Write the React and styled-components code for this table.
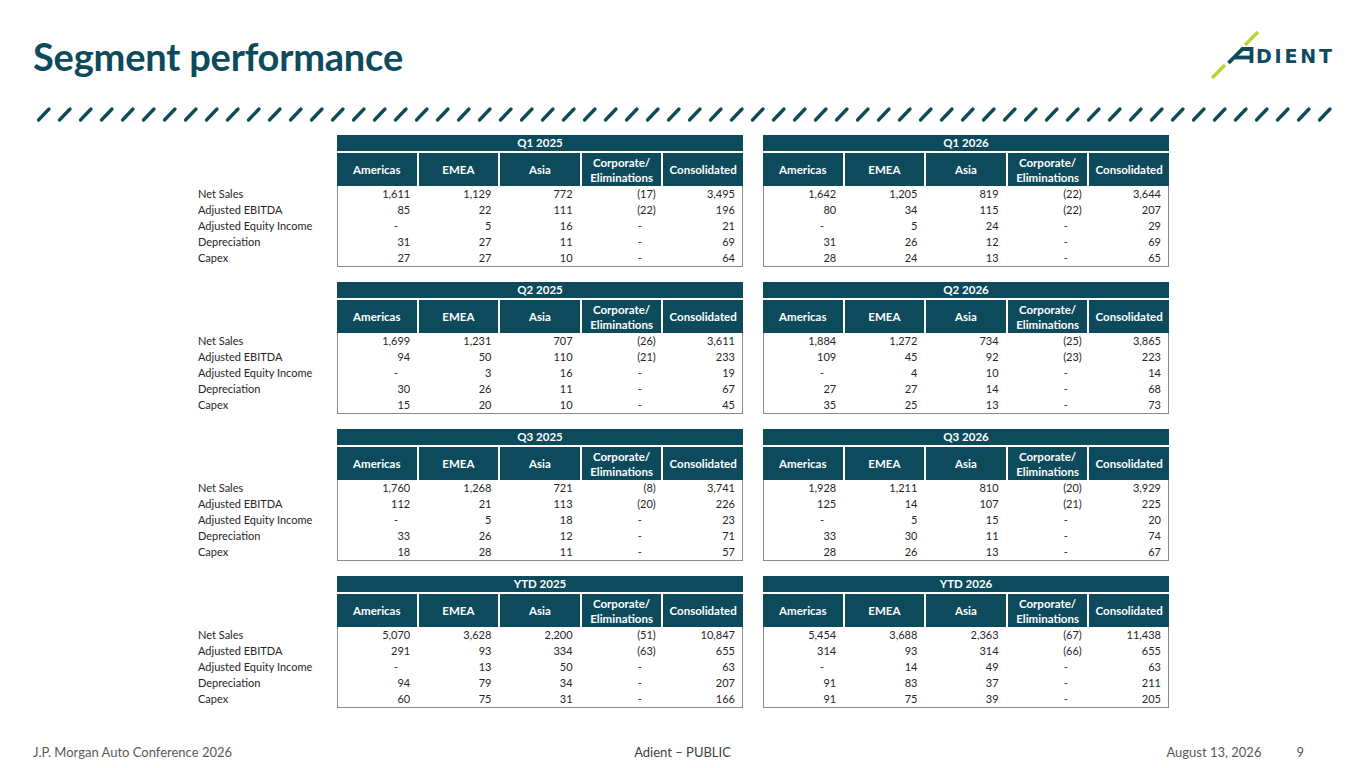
import React from "react";
import styled, { createGlobalStyle } from "styled-components";

const TEAL = "#0c4a5c";
const LIME = "#b7d432";

const Global = createGlobalStyle`
  html, body { margin: 0; padding: 0; background: #fff; }
  body { font-family: Lato, "Open Sans", "Liberation Sans", sans-serif; color: #262626; }
  * { box-sizing: border-box; }
`;

const Page = styled.div`
  width: 1365px;
  height: 768px;
  display: flex;
  flex-direction: column;
  overflow: hidden;
`;

const Top = styled.header`
  height: 100px;
  display: flex;
  justify-content: space-between;
  align-items: flex-start;
  padding: 0 30px 0 33px;
`;

const Title = styled.h1`
  margin: 34px 0 0;
  font-family: Lato, "Open Sans", sans-serif;
  font-weight: 700;
  font-size: 38px;
  line-height: 44px;
  color: ${TEAL};
  letter-spacing: -0.2px;
`;

const LogoBox = styled.div`
  margin-top: 28px;
  width: 130px;
  height: 55px;
`;

const Divider = styled.div`
  margin-top: 6px;
  height: 16px;
  padding-left: 37px;
`;

const Content = styled.main`
  margin-top: 13px;
  padding-left: 198px;
  display: flex;
  flex-direction: column;
  gap: 15px;
`;

const Block = styled.section`
  display: flex;
`;

const LabelCol = styled.div`
  width: 139px;
  padding-top: 51px;
  display: flex;
  flex-direction: column;
`;

const Label = styled.div`
  height: 16px;
  line-height: 16px;
  font-size: 11px;
  white-space: nowrap;
  color: #262626;
`;

const Tables = styled.div`
  display: flex;
  gap: 20px;
`;

const Table = styled.div`
  width: 406px;
  display: flex;
  flex-direction: column;
`;

const Bar = styled.div`
  height: 16px;
  line-height: 16px;
  background: ${TEAL};
  color: #fff;
  font-weight: 700;
  font-size: 11.5px;
  text-align: center;
  margin-bottom: 2px;
`;

const HeadRow = styled.div`
  display: grid;
  grid-template-columns: repeat(5, 1fr);
  column-gap: 2px;
  height: 33px;
`;

const HeadCell = styled.div`
  background: ${TEAL};
  color: #fff;
  font-weight: 700;
  font-size: 11.5px;
  line-height: 15px;
  text-align: center;
  display: flex;
  align-items: center;
  justify-content: center;
  padding-top: ${(p) => (p.$two ? "1px" : "0")};
`;

const Body = styled.div`
  border: 1px solid #8a8a8a;
  border-top: none;
  display: flex;
  flex-direction: column;
`;

const Row = styled.div`
  display: grid;
  grid-template-columns: repeat(5, 1fr);
  column-gap: 2px;
  height: 16px;
`;

const Cell = styled.div`
  font-size: 11px;
  line-height: 16px;
  text-align: right;
  white-space: nowrap;
  color: #262626;
  padding-right: ${(p) =>
    p.$kind === "dash" ? "19px" : p.$kind === "neg" ? "5px" : "7px"};
`;

const Footer = styled.footer`
  margin-top: auto;
  height: 24px;
  display: grid;
  grid-template-columns: 1fr auto 1fr;
  align-items: start;
  padding: 0 33px;
  font-size: 13px;
  line-height: 16px;
  color: #595959;
`;

const FootCenter = styled.div`
  color: #404040;
`;

const FootRight = styled.div`
  display: flex;
  justify-content: flex-end;
  gap: 35px;
  padding-right: 28px;
`;

const HEADERS = ["Americas", "EMEA", "Asia", "Corporate/\nEliminations", "Consolidated"];
const LABELS = ["Net Sales", "Adjusted EBITDA", "Adjusted Equity Income", "Depreciation", "Capex"];

const BLOCKS = [
  [
    {
      title: "Q1 2025",
      rows: [
        ["1,611", "1,129", "772", "(17)", "3,495"],
        ["85", "22", "111", "(22)", "196"],
        ["-", "5", "16", "-", "21"],
        ["31", "27", "11", "-", "69"],
        ["27", "27", "10", "-", "64"],
      ],
    },
    {
      title: "Q1 2026",
      rows: [
        ["1,642", "1,205", "819", "(22)", "3,644"],
        ["80", "34", "115", "(22)", "207"],
        ["-", "5", "24", "-", "29"],
        ["31", "26", "12", "-", "69"],
        ["28", "24", "13", "-", "65"],
      ],
    },
  ],
  [
    {
      title: "Q2 2025",
      rows: [
        ["1,699", "1,231", "707", "(26)", "3,611"],
        ["94", "50", "110", "(21)", "233"],
        ["-", "3", "16", "-", "19"],
        ["30", "26", "11", "-", "67"],
        ["15", "20", "10", "-", "45"],
      ],
    },
    {
      title: "Q2 2026",
      rows: [
        ["1,884", "1,272", "734", "(25)", "3,865"],
        ["109", "45", "92", "(23)", "223"],
        ["-", "4", "10", "-", "14"],
        ["27", "27", "14", "-", "68"],
        ["35", "25", "13", "-", "73"],
      ],
    },
  ],
  [
    {
      title: "Q3 2025",
      rows: [
        ["1,760", "1,268", "721", "(8)", "3,741"],
        ["112", "21", "113", "(20)", "226"],
        ["-", "5", "18", "-", "23"],
        ["33", "26", "12", "-", "71"],
        ["18", "28", "11", "-", "57"],
      ],
    },
    {
      title: "Q3 2026",
      rows: [
        ["1,928", "1,211", "810", "(20)", "3,929"],
        ["125", "14", "107", "(21)", "225"],
        ["-", "5", "15", "-", "20"],
        ["33", "30", "11", "-", "74"],
        ["28", "26", "13", "-", "67"],
      ],
    },
  ],
  [
    {
      title: "YTD 2025",
      rows: [
        ["5,070", "3,628", "2,200", "(51)", "10,847"],
        ["291", "93", "334", "(63)", "655"],
        ["-", "13", "50", "-", "63"],
        ["94", "79", "34", "-", "207"],
        ["60", "75", "31", "-", "166"],
      ],
    },
    {
      title: "YTD 2026",
      rows: [
        ["5,454", "3,688", "2,363", "(67)", "11,438"],
        ["314", "93", "314", "(66)", "655"],
        ["-", "14", "49", "-", "63"],
        ["91", "83", "37", "-", "211"],
        ["91", "75", "39", "-", "205"],
      ],
    },
  ],
];

const kindOf = (v) => (v === "-" ? "dash" : v.startsWith("(") ? "neg" : "pos");

function Logo() {
  return (
    <svg width="130" height="55" viewBox="0 0 130 55">
      <g stroke={LIME} strokeWidth="3.4" strokeLinecap="butt">
        <line x1="7" y1="50" x2="20" y2="37" />
        <line x1="40" y1="17" x2="53" y2="4" />
      </g>
      <g stroke={TEAL} strokeWidth="3.8" fill="none" strokeLinejoin="miter">
        <path d="M23.5 35 L37.5 21 L46.5 21 L46.5 35" />
        <line x1="30" y1="29.5" x2="46.5" y2="29.5" />
      </g>
      <text
        x="51"
        y="35"
        fontFamily="'DejaVu Sans', 'Liberation Sans', sans-serif"
        fontWeight="700"
        fontSize="19"
        fill={TEAL}
        textLength="76"
        lengthAdjust="spacing"
      >
        DIENT
      </text>
    </svg>
  );
}

function Slashes() {
  const n = 62;
  const items = [];
  for (let i = 0; i < n; i++) {
    const x = 1.5 + i * 21;
    items.push(<line key={i} x1={x} y1="14" x2={x + 10.5} y2="3" />);
  }
  return (
    <svg width="1300" height="17" viewBox="0 0 1300 17">
      <g stroke={TEAL} strokeWidth="3.3" strokeLinecap="round">{items}</g>
    </svg>
  );
}

function DataTable({ title, rows }) {
  return (
    <Table>
      <Bar>{title}</Bar>
      <HeadRow>
        {HEADERS.map((h) => {
          const parts = h.split("\n");
          return (
            <HeadCell key={h} $two={parts.length > 1}>
              <span>
                {parts.map((p, i) => (
                  <React.Fragment key={p}>
                    {i > 0 && <br />}
                    {p}
                  </React.Fragment>
                ))}
              </span>
            </HeadCell>
          );
        })}
      </HeadRow>
      <Body>
        {rows.map((r, ri) => (
          <Row key={ri}>
            {r.map((v, ci) => (
              <Cell key={ci} $kind={kindOf(v)}>
                {v}
              </Cell>
            ))}
          </Row>
        ))}
      </Body>
    </Table>
  );
}

export default function App() {
  return (
    <>
      <Global />
      <Page>
        <Top>
          <Title>Segment performance</Title>
          <LogoBox>
            <Logo />
          </LogoBox>
        </Top>
        <Divider>
          <Slashes />
        </Divider>
        <Content>
          {BLOCKS.map((pair, bi) => (
            <Block key={bi}>
              <LabelCol>
                {LABELS.map((l) => (
                  <Label key={l}>{l}</Label>
                ))}
              </LabelCol>
              <Tables>
                {pair.map((t) => (
                  <DataTable key={t.title} {...t} />
                ))}
              </Tables>
            </Block>
          ))}
        </Content>
        <Footer>
          <div>J.P. Morgan Auto Conference 2026</div>
          <FootCenter>Adient – PUBLIC</FootCenter>
          <FootRight>
            <span>August 13, 2026</span>
            <span>9</span>
          </FootRight>
        </Footer>
      </Page>
    </>
  );
}
